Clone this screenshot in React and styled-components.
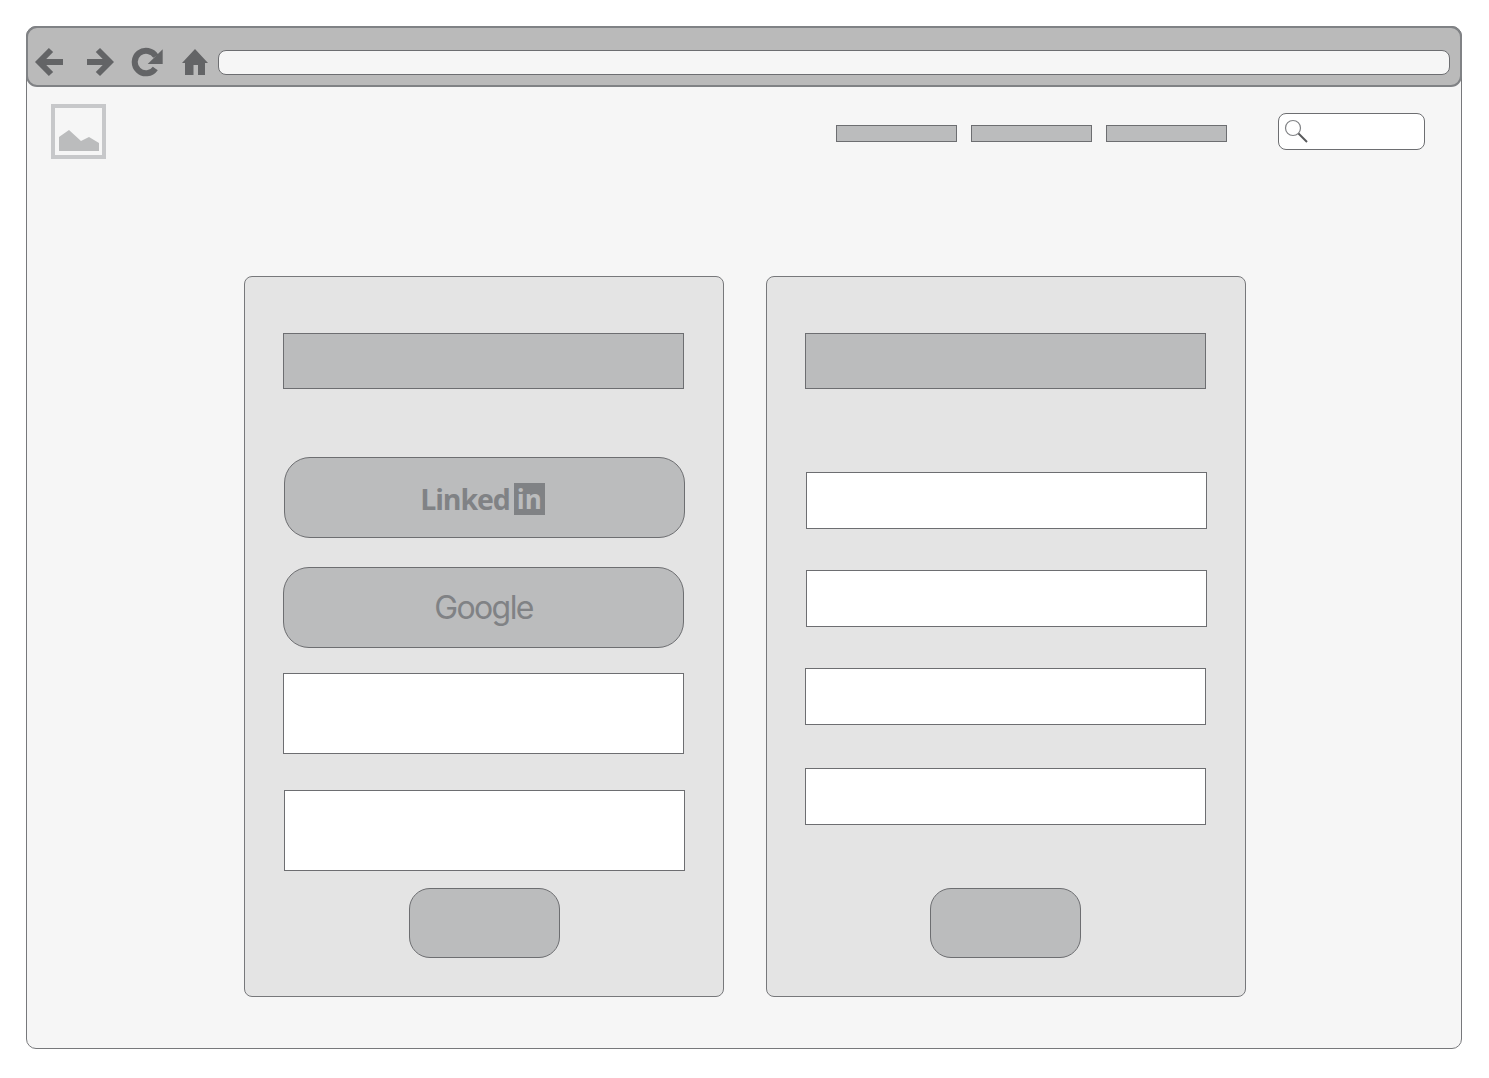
import React from "react";
import styled, { createGlobalStyle } from "styled-components";

const GlobalStyle = createGlobalStyle`
  html, body {
    margin: 0;
    padding: 0;
    background: #ffffff;
  }
  * {
    box-sizing: border-box;
  }
`;

const Page = styled.div`
  padding: 26px 27px 29px 26px;
  height: 1078px;
`;

const BrowserWindow = styled.div`
  height: 1023px;
  background: #f6f6f6;
  border: 1px solid #77787b;
  border-radius: 10px;
  display: flex;
  flex-direction: column;
`;

const Toolbar = styled.div`
  height: 61px;
  margin: -1px -1px 0;
  background: #bababa;
  border: 2px solid #808285;
  border-radius: 11px;
  display: flex;
  align-items: flex-start;
  padding: 19px 10px 0 6px;
`;

const ToolIcon = styled.svg`
  display: block;
  flex: none;
  margin-left: ${(p) => p.$left || 0}px;
  margin-top: ${(p) => p.$top || 0}px;
`;

const AddressBar = styled.div`
  flex: 1;
  height: 25px;
  margin: 3px 0 0 10px;
  background: #f6f6f6;
  border: 1px solid #6d6e71;
  border-radius: 8px;
`;

const Header = styled.div`
  height: 189px;
  display: flex;
  align-items: flex-start;
  padding: 17px 36px 0 24px;
`;

const Logo = styled.div`
  width: 55px;
  height: 55px;
  border: 4px solid #c7c8ca;
  display: flex;
  align-items: flex-end;
  justify-content: center;
  padding: 0 0 4px 2px;
`;

const Nav = styled.div`
  display: flex;
  gap: 14px;
  margin: 21px 0 0 auto;
`;

const NavItem = styled.div`
  width: 121px;
  height: 17px;
  background: #bbbcbd;
  border: 1px solid #6d6e71;
`;

const Search = styled.div`
  width: 147px;
  height: 37px;
  margin: 9px 0 0 51px;
  background: #ffffff;
  border: 1px solid #6d6e71;
  border-radius: 8px;
  padding: 5px 0 0 5px;
`;

const Cards = styled.div`
  display: flex;
  gap: 42px;
  padding-left: 217px;
`;

const Card = styled.div`
  width: 480px;
  height: 721px;
  background: #e4e4e4;
  border: 1px solid #77787b;
  border-radius: 8px;
  display: flex;
  flex-direction: column;
  padding: 56px 0 0 38px;
`;

const Title = styled.div`
  width: 401px;
  height: 56px;
  background: #bbbcbd;
  border: 1px solid #6d6e71;
`;

const SocialButton = styled.div`
  width: 401px;
  height: 81px;
  margin-top: ${(p) => p.$top}px;
  margin-left: ${(p) => p.$shift || 0}px;
  padding-top: ${(p) => p.$nudge || 0}px;
  background: #bbbcbd;
  border: 1px solid #6d6e71;
  border-radius: 26px;
  display: flex;
  align-items: center;
  justify-content: center;
`;

const LinkedInWord = styled.span`
  font-family: "Open Sans", sans-serif;
  font-weight: 700;
  font-size: 28.5px;
  line-height: 34px;
  letter-spacing: -1.1px;
  color: #808285;
`;

const LinkedInBadge = styled.span`
  width: 31px;
  height: 32px;
  margin: 0 4px 0 4px;
  background: #808285;
  color: #bbbcbd;
  font-family: "Open Sans", sans-serif;
  font-weight: 700;
  font-size: 26px;
  line-height: 32px;
  text-align: center;
`;

const GoogleWord = styled.span`
  font-family: Inter, sans-serif;
  font-weight: 400;
  font-size: 32px;
  line-height: 38px;
  letter-spacing: -1.6px;
  color: #808285;
`;

const Field = styled.div`
  width: 401px;
  height: ${(p) => p.$height}px;
  margin-top: ${(p) => p.$top}px;
  margin-left: ${(p) => p.$shift || 0}px;
  background: #ffffff;
  border: 1px solid #6d6e71;
`;

const Submit = styled.div`
  width: 151px;
  height: 70px;
  margin-top: ${(p) => p.$top}px;
  margin-left: ${(p) => p.$left}px;
  background: #bbbcbd;
  border: 1px solid #6d6e71;
  border-radius: 21px;
`;

const App = () => {
  return (
    <Page>
      <GlobalStyle />
      <BrowserWindow>
        <Toolbar>
          <ToolIcon width="29" height="30" viewBox="0 0 29 30">
            <path d="M29 15H6M17 3L5.200 15 17 27" fill="none" stroke="#636466" strokeWidth="6" />
          </ToolIcon>
          <ToolIcon width="29" height="30" viewBox="0 0 29 30" $left={22}>
            <path d="M2 15h21M12.900 3L24.800 15 12.900 27" fill="none" stroke="#636466" strokeWidth="6" />
          </ToolIcon>
          <ToolIcon width="33" height="31" viewBox="0 0 33 31" $left={17}>
            <path d="M24.800 9.350A11.300 11.300 0 1 0 24.300 21.500" fill="none" stroke="#636466" strokeWidth="6" />
            <path d="M31.700 2.300V17H16.700Z" fill="#636466" />
          </ToolIcon>
          <ToolIcon width="26" height="26" viewBox="0 0 26 26" $left={18} $top={2}>
            <path d="M13 0L26 14H23V26H16V16H11.500V26H3V14H0Z" fill="#636466" />
          </ToolIcon>
          <AddressBar />
        </Toolbar>
        <Header>
          <Logo>
            <svg width="41" height="21" viewBox="0 0 41 21">
              <path d="M0 7L10 0 22 11 30 7 40 13V21H0Z" fill="#bbbcbd" />
            </svg>
          </Logo>
          <Nav>
            <NavItem />
            <NavItem />
            <NavItem />
          </Nav>
          <Search>
            <svg width="26" height="26" viewBox="0 0 26 26" style={{ display: "block" }}>
              <circle cx="9" cy="9" r="7.500" fill="none" stroke="#808285" strokeWidth="1.200" />
              <path d="M14.500 14.500L23 23" fill="none" stroke="#58595b" strokeWidth="2" />
            </svg>
          </Search>
        </Header>
        <Cards>
          <Card>
            <Title />
            <SocialButton $top={68} $shift={1} $nudge={2}>
              <LinkedInWord>Linked</LinkedInWord>
              <LinkedInBadge>in</LinkedInBadge>
            </SocialButton>
            <SocialButton $top={29}>
              <GoogleWord>Google</GoogleWord>
            </SocialButton>
            <Field $height={81} $top={25} />
            <Field $height={81} $top={36} $shift={1} />
            <Submit $top={17} $left={126} />
          </Card>
          <Card>
            <Title />
            <Field $height={57} $top={83} $shift={1} />
            <Field $height={57} $top={41} $shift={1} />
            <Field $height={57} $top={41} />
            <Field $height={57} $top={43} />
            <Submit $top={63} $left={125} />
          </Card>
        </Cards>
      </BrowserWindow>
    </Page>
  );
};

export default App;
